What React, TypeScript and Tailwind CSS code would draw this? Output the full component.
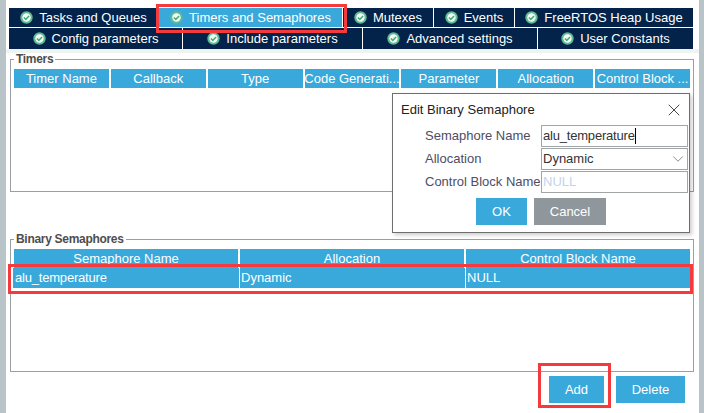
import type { ReactNode } from "react";
import { ChevronDown, X } from "lucide-react";

const topTabs = [
  { label: "Tasks and Queues", w: "w-[150px]" },
  { label: "Timers and Semaphores", w: "w-[184px]", active: true },
  { label: "Mutexes", w: "w-[91px]" },
  { label: "Events", w: "w-[81px]" },
  { label: "FreeRTOS Heap Usage", w: "w-[178px]" },
];

const bottomTabs = [
  { label: "Config parameters", w: "w-[174px]" },
  { label: "Include parameters", w: "w-[180px]" },
  { label: "Advanced settings", w: "w-[175px]" },
  { label: "User Constants", w: "w-[155px]" },
];

const timerCols = ["Timer Name", "Callback", "Type", "Code Generati...", "Parameter", "Allocation", "Control Block ..."];
const semCols = ["Semaphore Name", "Allocation", "Control Block Name"];

function CheckIcon() {
  return (
    <svg width="13" height="13" viewBox="0 0 13 13" className="shrink-0">
      <circle cx="6.5" cy="6.5" r="6.2" fill="#5dbb8f" />
      <circle cx="6.5" cy="6.5" r="4.2" fill="#f4fbf7" />
      <path d="M3.9 6.5 L5.8 8.3 L9.1 5" fill="none" stroke="#3fb07c" strokeWidth="1.6" />
    </svg>
  );
}

function Tab({ label, w, active }: { label: string; w: string; active?: boolean }) {
  return (
    <div
      className={`${w} h-full flex items-center justify-center gap-[6px] text-white text-[13px] border-r border-white last:border-r-0 ${
        active ? "bg-[#39a9dc] -my-px h-[22px] relative" : ""
      }`}
    >
      <CheckIcon />
      <span className="pt-px">{label}</span>
    </div>
  );
}

function GroupBox({ title, cols, children }: { title: string; cols: string[]; children?: ReactNode }) {
  return (
    <fieldset className="border border-[#9a9fa3] h-[139px] px-[3px] pb-0 min-w-0">
      <legend className="px-[2px] text-[12px] leading-[12px] font-bold text-[#4d4d4d] tracking-[-0.3px]">{title}</legend>
      <div className="flex gap-[2px] mt-[4px] h-[19px]">
        {cols.map((c) => (
          <div key={c} className="flex-1 min-w-0 bg-[#39a9dc] text-white text-[13px] flex items-center justify-center whitespace-nowrap px-px">
            {c}
          </div>
        ))}
      </div>
      {children}
    </fieldset>
  );
}

export default function App() {
  return (
    <div className="w-[704px] h-[413px] flex bg-white overflow-hidden relative font-['Liberation_Sans',Arial,sans-serif]">
      <div className="w-[6px] bg-[#b9c4c9]" />
      <div className="w-[693px] pt-[8px]">
        <div className="ml-[3px] w-[684px]">
          <div className="flex items-center h-[19px] bg-[#03234b]">
            {topTabs.map((t) => (
              <Tab key={t.label} {...t} />
            ))}
          </div>
          <div className="flex items-center h-[21px] mt-px bg-[#03234b]">
            {bottomTabs.map((t) => (
              <Tab key={t.label} {...t} />
            ))}
          </div>
        </div>
        <div className="h-[4px] bg-[#f0f3f4]" />
        <div className="ml-[4px] w-[684px]">
          <GroupBox title="Timers" cols={timerCols} />
          <div className="h-[41px]" />
          <GroupBox title="Binary Semaphores" cols={semCols}>
            <div className="flex h-[20px] bg-[#39a9dc] text-white text-[13px] -ml-px">
              <div className="w-[227px] flex items-center border-r border-white pl-[2px] tracking-[-0.2px]">alu_temperature</div>
              <div className="w-[226px] flex items-center border-r border-white pl-px">Dynamic</div>
              <div className="flex-1 flex items-center pl-px">NULL</div>
            </div>
          </GroupBox>
          <div className="flex justify-end gap-[12px] mt-[4px] mr-[9px]">
            <button className="w-[55px] h-[27px] bg-[#39a9dc] text-white text-[13px]">Add</button>
            <button className="w-[69px] h-[27px] bg-[#39a9dc] text-white text-[13px]">Delete</button>
          </div>
        </div>
      </div>
      <div className="w-[5px] bg-[#b9c4c9]" />

      {/* Dialog */}
      <div className="absolute left-[392px] top-[93px] w-[298px] h-[140px] bg-white border border-[#6e6e6e] shadow-[2px_2px_4px_rgba(0,0,0,0.2)] text-[13px] text-[#4d4d66]">
        <div className="flex items-center justify-between h-[31px] pl-[8px] pr-[5px] text-[#222]">
          <span>Edit Binary Semaphore</span>
          <X size={20} strokeWidth={1} />
        </div>
        <div className="flex flex-col gap-px pl-[32px] pr-px">
          <div className="flex h-[22px] items-center">
            <span className="w-[116px]">Semaphore Name</span>
            <div className="flex-1 h-full border border-[#a0a5a8] flex items-center pl-px text-[#333] tracking-[-0.2px]">
              alu_temperature<span className="w-px h-[16px] bg-black" />
            </div>
          </div>
          <div className="flex h-[22px] items-center">
            <span className="w-[116px]">Allocation</span>
            <div className="flex-1 h-full border border-[#a0a5a8] flex items-center justify-between pl-px text-[#333]">
              Dynamic
              <ChevronDown size={18} strokeWidth={1} className="text-[#666]" />
            </div>
          </div>
          <div className="flex h-[22px] items-center">
            <span className="w-[116px] whitespace-nowrap">Control Block Name</span>
            <div className="flex-1 h-full border border-[#a0a5a8] flex items-center pl-px text-[#c3d5ea]">NULL</div>
          </div>
        </div>
        <div className="flex gap-[7px] ml-[83px] mt-[5px]">
          <button className="w-[51px] h-[27px] bg-[#39a9dc] text-white">OK</button>
          <button className="w-[72px] h-[27px] bg-[#90979c] text-white">Cancel</button>
        </div>
      </div>

      {/* Red annotation boxes */}
      <div className="absolute left-[156px] top-[4px] w-[191px] h-[29px] border-[3px] border-[#f53a3d]" />
      <div className="absolute left-[8px] top-[264px] w-[685px] h-[30px] border-[3px] border-[#f53a3d]" />
      <div className="absolute left-[538px] top-[363px] w-[73px] h-[45px] border-[3px] border-[#f53a3d]" />
    </div>
  );
}
